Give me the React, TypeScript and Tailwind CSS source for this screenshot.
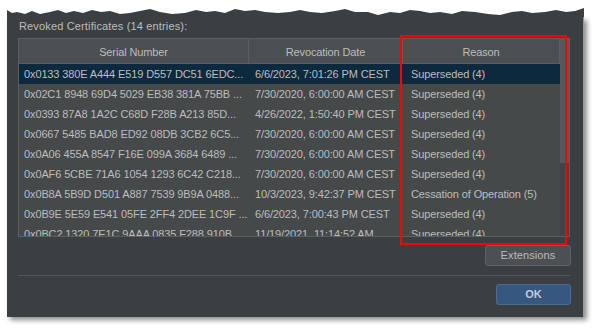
import React from 'react';

interface Row {
  serial: string
  date: string
  reason: string
}

const rows: Row[] = [
  { serial: "0x0133 380E A444 E519 D557 DC51 6EDC...", date: "6/6/2023, 7:01:26 PM CEST", reason: "Superseded (4)" },
  { serial: "0x02C1 8948 69D4 5029 EB38 381A 75BB ...", date: "7/30/2020, 6:00:00 AM CEST", reason: "Superseded (4)" },
  { serial: "0x0393 87A8 1A2C C68D F28B A213 85D...", date: "4/26/2022, 1:50:40 PM CEST", reason: "Superseded (4)" },
  { serial: "0x0667 5485 BAD8 ED92 08DB 3CB2 6C5...", date: "7/30/2020, 6:00:00 AM CEST", reason: "Superseded (4)" },
  { serial: "0x0A06 455A 8547 F16E 099A 3684 6489 ...", date: "7/30/2020, 6:00:00 AM CEST", reason: "Superseded (4)" },
  { serial: "0x0AF6 5CBE 71A6 1054 1293 6C42 C218...", date: "7/30/2020, 6:00:00 AM CEST", reason: "Superseded (4)" },
  { serial: "0x0B8A 5B9D D501 A887 7539 9B9A 0488...", date: "10/3/2023, 9:42:37 PM CEST", reason: "Cessation of Operation (5)" },
  { serial: "0x0B9E 5E59 E541 05FE 2FF4 2DEE 1C9F ...", date: "6/6/2023, 7:00:43 PM CEST", reason: "Superseded (4)" },
  { serial: "0x0BC2 1320 7E1C 9AAA 0835 F288 910B...", date: "11/19/2021, 11:14:52 AM", reason: "Superseded (4)" },
]

// torn paper edge along the top of the dialog
const edge = [
  [0, 3], [5, 6], [10, 5], [18, 7], [25, 4], [33, 7], [43, 5], [51, 3], [59, 6], [67, 4], [76, 6], [85, 3],
  [94, 5], [103, 4], [113, 7], [123, 6], [133, 4], [143, 2], [153, 5], [165, 7], [178, 6], [189, 3], [199, 5],
  [208, 4], [218, 6], [228, 2], [238, 4], [248, 3], [258, 5], [271, 6], [283, 5], [293, 3], [303, 5], [315, 6],
  [328, 4], [338, 2], [348, 5], [361, 5], [371, 8], [383, 5], [393, 6], [403, 3], [413, 4], [423, 6], [433, 5],
  [445, 7], [455, 4], [468, 5], [481, 7], [493, 8], [505, 5], [515, 4], [525, 6], [538, 5], [549, 3], [559, 5],
  [568, 4], [577, 1],
]

function TornEdge() {
  const pts = [...edge.map(([x, y]) => `${x},${y}`), "577,10", "0,10"].join(" ")
  return (
    <svg width="577" height="10" viewBox="0 0 577 10" className="block">
      <polygon points={pts} fill="#3c3f41" />
    </svg>
  )
}

export default function App() {
  return (
    <div className="w-[594px] h-[329px] bg-white relative overflow-hidden font-['Liberation_Sans',Arial,sans-serif] text-[11px] tracking-[-0.12px] text-[#bdbdbd]">
      <div className="ml-[7px] mt-[7px] w-[577px]">
        <TornEdge />
        <div className="h-[300px] bg-[#3c3f41] border-r border-[#8d9cab] shadow-[3px_3px_5px_rgba(0,0,0,0.45)] pl-[11px] pr-[12px]">
          {/* label */}
          <p className="pt-[2px] pl-[1px] h-[15px] leading-[14px] tracking-[0.15px]">Revoked Certificates (14 entries):</p>

          {/* table */}
          <div className="mt-[6px] w-[552px] h-[199px] border border-[#5b5f61] bg-[#45494a] flex overflow-hidden">
            <div className="w-[541px] flex flex-col">
              <div className="h-[25px] flex border-b border-[#5b5f61] bg-[#4b4f51] shrink-0">
                <div className="w-[230px] border-r border-[#5b5f61] flex items-center justify-center pt-[2px]">Serial Number</div>
                <div className="w-[154px] border-r border-[#5b5f61] flex items-center justify-center pt-[2px]">Revocation Date</div>
                <div className="flex-1 border-r border-[#5b5f61] flex items-center justify-center pt-[2px]">Reason</div>
              </div>
              {rows.map((r, i) => (
                <div key={i} className={`h-[20px] shrink-0 flex items-center whitespace-nowrap ${i === 0 ? "bg-[#0d293e]" : ""}`}>
                  <div className="w-[230px] pl-[5px] overflow-hidden">{r.serial}</div>
                  <div className="w-[154px] pl-[6px] overflow-hidden">{r.date}</div>
                  <div className="flex-1 pl-[8px] overflow-hidden">{r.reason}</div>
                </div>
              ))}
            </div>
            {/* scrollbar */}
            <div className="w-[9px] bg-[#414446] flex flex-col">
              <div className="h-[124px] bg-[#55595b]"></div>
            </div>
          </div>

          <div className="flex justify-end mt-[8px]">
            <button className="w-[86px] h-[21px] rounded-[3px] bg-[#4c5052] border border-[#5e6262] text-[#bbbbbb] tracking-[0.1px]">Extensions</button>
          </div>

          <div className="mt-[9px] w-[552px] h-px bg-[#53575a]"></div>

          <div className="flex justify-end mt-[8px]">
            <button className="w-[75px] h-[21px] rounded-[3px] bg-[#365880] border border-[#4a6e92] font-bold text-[#c5cad0]">OK</button>
          </div>
        </div>
      </div>

      {/* red highlight frame */}
      <div className="absolute left-[400px] top-[35px] w-[167px] h-[210px] border-2 border-[#ff0000]"></div>
    </div>
  )
}
